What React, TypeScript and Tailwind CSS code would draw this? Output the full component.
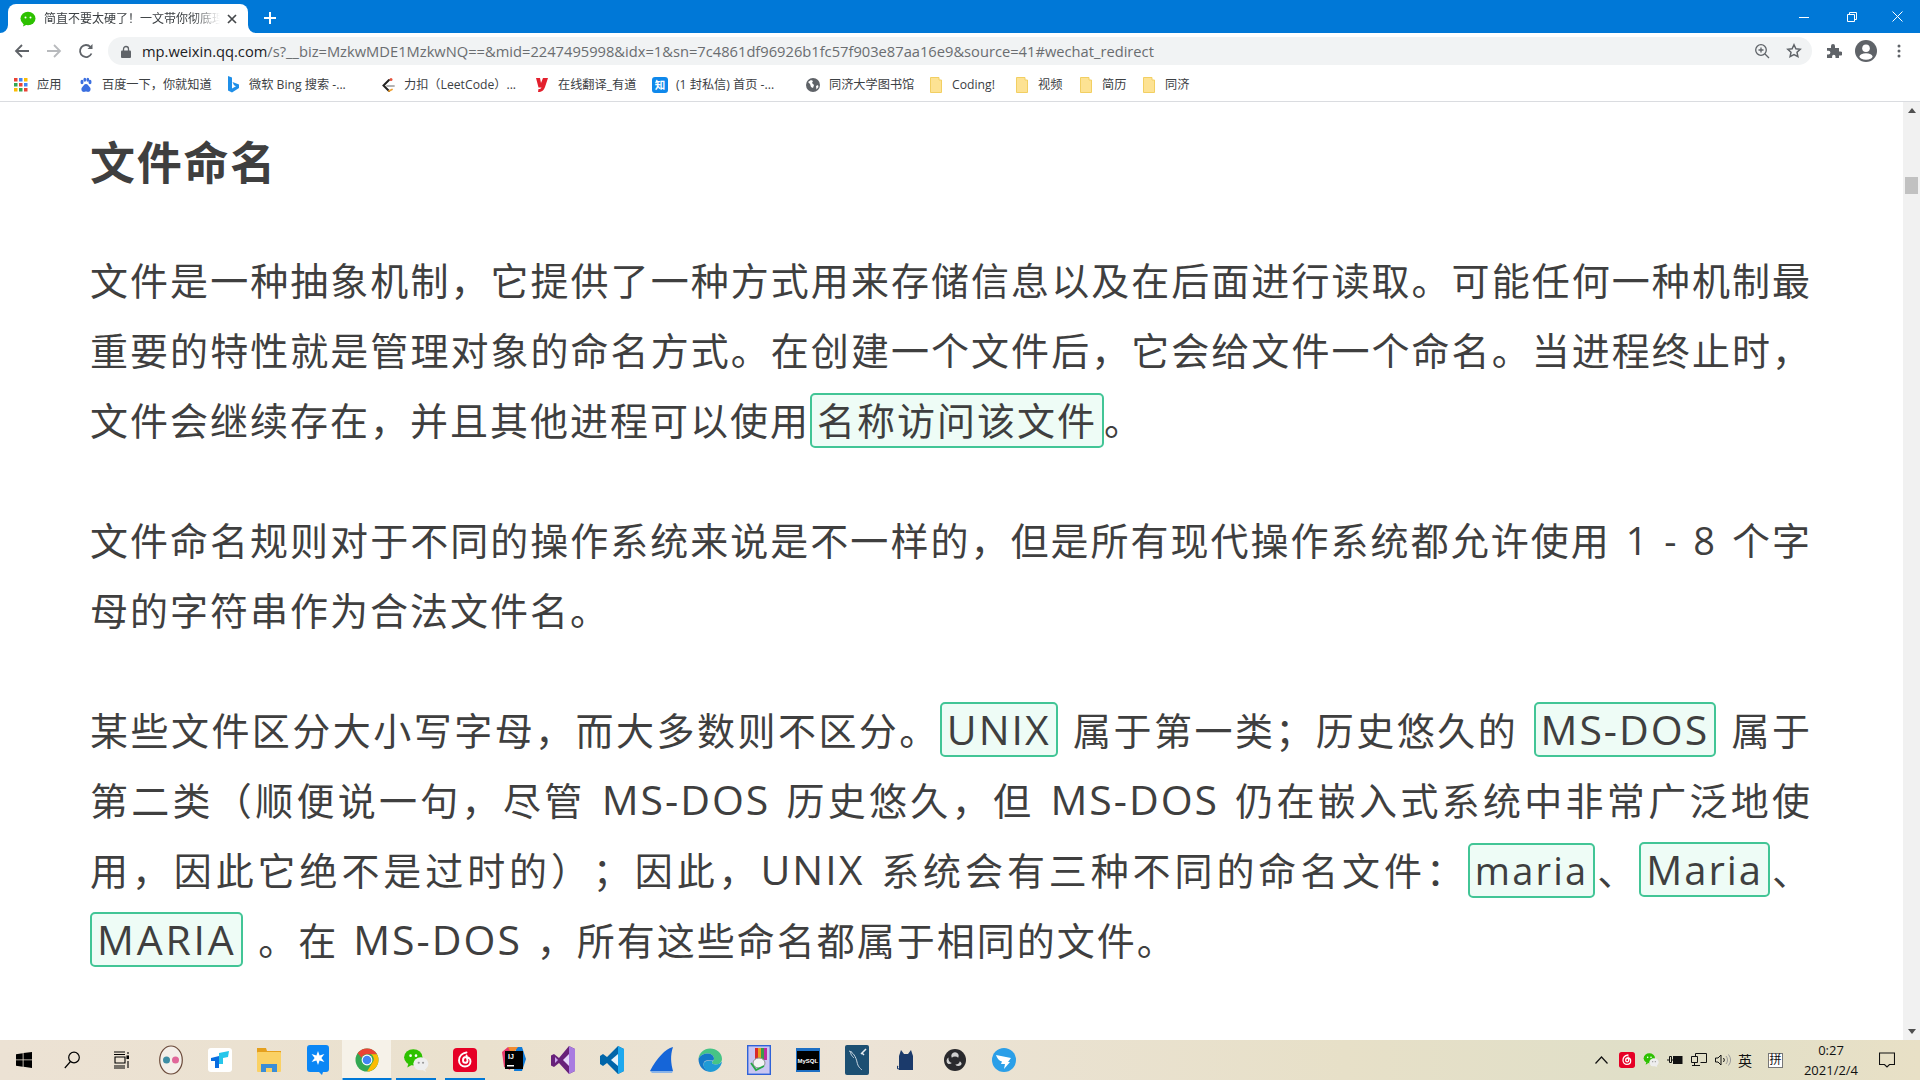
import React from 'react';

const ui = { fontFamily: '"Open Sans", "Noto Sans CJK SC", sans-serif' };

const WeChatGlyph = ({ size = 24 }: { size?: number }) => (
  <svg width={size} height={size} viewBox="0 0 24 24">
    <ellipse cx="9.5" cy="9.5" rx="8.5" ry="7.5" fill="#2dc100" />
    <path d="M5 15l-1 4 4-2.5z" fill="#2dc100" />
    <circle cx="7" cy="8" r="1.2" fill="#fff" />
    <circle cx="12" cy="8" r="1.2" fill="#fff" />
    <ellipse cx="16.5" cy="15.5" rx="7" ry="6" fill="#eeeeee" />
    <path d="M20 20l1.5 3-4-2z" fill="#eeeeee" />
    <circle cx="14.5" cy="14.5" r="1" fill="#999" />
    <circle cx="18.5" cy="14.5" r="1" fill="#999" />
  </svg>
);

const NeteaseGlyph = ({ size = 24 }: { size?: number }) => (
  <svg width={size} height={size} viewBox="0 0 24 24">
    <rect width="24" height="24" rx="4" fill="#e60026" />
    <path d="M13.5 4.5c-4 .6-7.5 3.5-7.5 8 0 3.6 2.800 6 6 6 3.200 0 5.500-2.300 5.500-5 0-2.600-2-4.500-4.300-4.500-2 0-3.200 1.500-3.200 3.200 0 1.500 1 2.600 2.300 2.600 1.400 0 2.200-1.200 2.200-2.400L13.500 7.500" fill="none" stroke="#fff" strokeWidth="1.900" strokeLinecap="round" />
  </svg>
);

const Folder = () => (
  <svg width="12" height="16" viewBox="0 0 12 16" className="mr-[2px] shrink-0">
    <path d="M.5.5h8.500v2.500h2.500v12.500h-11z" fill="#fde293" stroke="#f2cf62" />
  </svg>
);

const bookmarks: { width: string; label: string; icon: React.ReactNode }[] = [
  {
    width: 'w-[65px]',
    label: '应用',
    icon: (
      <svg width="16" height="16" viewBox="0 0 16 16">
        {[1, 6, 11].flatMap((y, i) =>
          [1, 6, 11].map((x, j) => (
            <rect key={`${i}${j}`} x={x} y={y} width="3.500" height="3.500" fill={['#ea4335', '#4285f4', '#fbbc04', '#34a853', '#ea4335', '#4285f4', '#fbbc04', '#34a853', '#ea4335'][i * 3 + j]} />
          )),
        )}
      </svg>
    ),
  },
  {
    width: 'w-[147px]',
    label: '百度一下，你就知道',
    icon: (
      <svg width="16" height="16" viewBox="0 0 16 16" fill="#3b6fe0">
        <ellipse cx="4" cy="5" rx="1.500" ry="2.200" />
        <ellipse cx="12" cy="5" rx="1.500" ry="2.200" />
        <ellipse cx="6.800" cy="2.800" rx="1.400" ry="2" />
        <ellipse cx="9.800" cy="2.800" rx="1.400" ry="2" />
        <path d="M8 7c-2 0-2.500 2-4 3.500C2.800 12 3.500 15 6 15c1 0 1.200-.4 2-.4s1 .4 2 .4c2.500 0 3.200-3 2-4.500C10.500 9 10 7 8 7z" />
      </svg>
    ),
  },
  {
    width: 'w-[155px]',
    label: '微软 Bing 搜索 -...',
    icon: (
      <svg width="16" height="18" viewBox="0 0 16 18">
        <path d="M3 0l4 1.500v11l4-2.200-2-1L7.500 6l6.500 2.500v3.500L7 16.500 3 14.500z" fill="#1f8fe8" />
      </svg>
    ),
  },
  {
    width: 'w-[154px]',
    label: '力扣（LeetCode）...',
    icon: (
      <svg width="16" height="16" viewBox="0 0 16 16" fill="none" strokeLinecap="round">
        <path d="M9 3L3.500 8.500 9 14" stroke="#222" strokeWidth="2" />
        <path d="M7 9h7" stroke="#b3b3b3" strokeWidth="1.800" />
        <path d="M9 14l3-1.500" stroke="#f0a030" strokeWidth="1.800" />
        <circle cx="11" cy="2.500" r="1.500" fill="#e5533d" />
      </svg>
    ),
  },
  {
    width: 'w-[118px]',
    label: '在线翻译_有道',
    icon: (
      <svg width="16" height="16" viewBox="0 0 16 16" fill="#e3202d">
        <path d="M2 1h4l1 5 2-5h5l-3 9c-1 3-3 5-7 5l.5-3c1.500 0 2.500-.5 3-1.500H4.500z" />
      </svg>
    ),
  },
  {
    width: 'w-[153px]',
    label: '(1 封私信) 首页 -...',
    icon: (
      <svg width="16" height="16" viewBox="0 0 16 16">
        <rect width="16" height="16" rx="3" fill="#0f88eb" />
        <text x="8" y="12" textAnchor="middle" fontSize="10.500" fontWeight="700" fill="#fff" fontFamily='"Noto Sans CJK SC", sans-serif'>知</text>
      </svg>
    ),
  },
  {
    width: 'w-[125px]',
    label: '同济大学图书馆',
    icon: (
      <svg width="16" height="16" viewBox="0 0 16 16">
        <circle cx="8" cy="8" r="7" fill="#5f6368" />
        <path d="M3 5l3-2 2 1-1 2 2 2-1 3-2-1-1-3zM11 9l2-1 .5 2-2 2.500z" fill="#fff" />
      </svg>
    ),
  },
  { width: 'w-[86px]', label: 'Coding!', icon: <Folder /> },
  { width: 'w-[64px]', label: '视频', icon: <Folder /> },
  { width: 'w-[63px]', label: '简历', icon: <Folder /> },
  { width: 'w-[60px]', label: '同济', icon: <Folder /> },
];

const apps: { id: string; box?: string; icon: React.ReactNode }[] = [
  {
    id: 'flickr',
    icon: (
      <svg width="24" height="30" viewBox="0 0 24 30">
        <ellipse cx="12" cy="15" rx="11.300" ry="14" fill="#f4efe9" stroke="#6b4a3a" strokeWidth="1.200" />
        <circle cx="7.500" cy="15" r="3.500" fill="#3e8ea5" />
        <circle cx="16.500" cy="15" r="3.500" fill="#e0679a" />
      </svg>
    ),
  },
  {
    id: 'todo',
    icon: (
      <svg width="24" height="30" viewBox="0 0 24 30">
        <rect y="3" width="24" height="24" rx="3" fill="#fff" />
        <path d="M3 13l8-2v12H7v-7H3z" fill="#0a6de0" />
        <path d="M11 8l10-2-1 6-5 1v6h-4z" fill="#26c6ea" />
      </svg>
    ),
  },
  {
    id: 'files',
    icon: (
      <svg width="24" height="26" viewBox="0 0 24 26">
        <path d="M0 1h9l1 3h14v2H0z" fill="#e5a01d" />
        <rect y="5" width="24" height="20" rx="1" fill="#fad165" />
        <path d="M4 17h16v8h-5v-4H9v4H4z" fill="#3b8ed8" />
      </svg>
    ),
  },
  {
    id: 'tim',
    icon: (
      <svg width="22" height="30" viewBox="0 0 22 30">
        <path d="M3 0h16a3 3 0 013 3v21a3 3 0 01-3 3h-3l-1 3-3-3H3a3 3 0 01-3-3V3a3 3 0 013-3z" fill="#0a86f5" />
        <path d="M11 6l1.600 4.600 4.800-1.600-3 4 3 4-4.800-1.600L11 20l-1.600-4.600L4.600 17l3-4-3-4 4.800 1.600z" fill="#fff" />
      </svg>
    ),
  },
  {
    id: 'chrome',
    box: 'bg-[#f6f2e9]',
    icon: (
      <svg width="24" height="28" viewBox="0 0 24 24">
        <circle cx="12" cy="12" r="11.500" fill="#34a853" />
        <path d="M12 .5a11.500 11.500 0 0110 5.800H12a5.700 5.700 0 00-5.300 3.400L2.600 5.300A11.500 11.500 0 0112 .5z" fill="#ea4335" />
        <path d="M22 6.300a11.500 11.500 0 01-10 17.200l5-8.200a5.700 5.700 0 00-1-9z" fill="#fbbc04" />
        <circle cx="12" cy="12" r="5.400" fill="#fff" />
        <circle cx="12" cy="12" r="4.300" fill="#4285f4" />
      </svg>
    ),
  },
  { id: 'wechat', icon: <WeChatGlyph size={26} /> },
  { id: 'netease', icon: <NeteaseGlyph size={24} /> },
  {
    id: 'idea',
    icon: (
      <svg width="24" height="26" viewBox="0 0 24 26">
        <path d="M0 5l6-5 6 3-4 20-6-3z" fill="#e8386b" />
        <path d="M14 0h6l4 12-4 12H12z" fill="#0e7ad8" />
        <path d="M6 0h10L10 8z" fill="#f28b30" />
        <rect x="3" y="4" width="18" height="18" fill="#000" />
        <text x="6" y="12" fontSize="7" fontWeight="700" fill="#fff" fontFamily='"Liberation Sans", sans-serif'>IJ</text>
        <rect x="5" y="18" width="7" height="1.500" fill="#fff" />
      </svg>
    ),
  },
  {
    id: 'vs',
    icon: (
      <svg width="24" height="30" viewBox="0 0 24 30">
        <path d="M18 1l6 3v22l-6 3-10-11-5 4-3-1.500V10.500L3 9l5 4z" fill="#68217a" />
        <path d="M18 1l6 3v22l-6 3z" fill="#a97be0" />
        <path d="M4 12v6l3-3z" fill="#c9a6ee" />
        <path d="M18 9l-6 6 6 6z" fill="#e6d7fa" />
      </svg>
    ),
  },
  {
    id: 'vscode',
    icon: (
      <svg width="24" height="30" viewBox="0 0 24 30">
        <path d="M18 1l6 3v22l-6 3-11-11-4 3-3-2V11l3-2 4 3z" fill="#0065a9" />
        <path d="M18 1l6 3v22l-6 3z" fill="#1ea8ee" />
        <path d="M18 9l-7 6 7 6z" fill="#e9f3fa" />
      </svg>
    ),
  },
  {
    id: 'wireshark',
    icon: (
      <svg width="24" height="28" viewBox="0 0 24 28">
        <path d="M24 1C16 3 8 12 1 25h23c-2-8-3-15 0-24z" fill="#1565d8" />
        <path d="M1 25h23l-1 2H3z" fill="#8ab4e8" />
      </svg>
    ),
  },
  {
    id: 'edge',
    icon: (
      <svg width="24" height="30" viewBox="0 0 24 24">
        <path d="M12 .5C18.500.5 24 5 24 11c0 3.500-3 5.500-6 5.500-2.500 0-4-1-4-2 0-1 2-1.500 2-4 0-3-3-5-6.500-5C5 5.500 1.500 8 .5 11 1 5 6 .5 12 .5z" fill="#46c486" />
        <path d="M.5 11c1-3 4.500-5.500 9-5.500 3.500 0 6.500 2 6.500 5 0 .8-.2 1.500-.7 2H9c-2 0-3.500 1.500-3.500 4 0 3 2.500 6 6.500 7C5.500 24 .5 18 .5 11z" fill="#1478c8" />
        <path d="M9 13c3 0 5-.2 6.300-.5-.8 1-1.300 1.200-1.300 2 0 1 1.500 2 4 2 2 0 4.500-1 6-3-1 6-6 10.500-12 10.500-3.500-1-6.500-4-6.500-7 0-2.500 1.500-4 3.500-4z" fill="#1f9ad6" />
      </svg>
    ),
  },
  {
    id: 'winrar',
    icon: (
      <svg width="24" height="30" viewBox="0 0 24 30">
        <rect x=".7" y=".7" width="22.600" height="28.600" fill="#c9c6f2" stroke="#2f62d8" strokeWidth="1.400" />
        <rect x="8" y="3" width="3" height="12" fill="#d92a2a" />
        <rect x="11" y="3" width="3" height="12" fill="#e8a020" />
        <rect x="14" y="3" width="3" height="12" fill="#3a9a4a" />
        <rect x="17" y="3" width="3" height="12" fill="#c02aa0" />
        <ellipse cx="12" cy="18" rx="6" ry="5" fill="#f3f3f3" stroke="#8f8f8f" />
        <path d="M4 18l5 7 8-4" fill="none" stroke="#28a745" strokeWidth="1.800" />
      </svg>
    ),
  },
  {
    id: 'mysqlcli',
    icon: (
      <svg width="24" height="24" viewBox="0 0 24 24">
        <rect width="24" height="24" fill="#1d6fc4" />
        <rect x="1" y="3" width="22" height="19" fill="#000" />
        <text x="1.500" y="15" fontSize="6" fontWeight="700" fill="#fff" fontFamily='"Liberation Sans", sans-serif'>MySQL</text>
      </svg>
    ),
  },
  {
    id: 'workbench',
    icon: (
      <svg width="24" height="30" viewBox="0 0 24 30">
        <rect width="24" height="30" rx="2" fill="#1c4f72" />
        <path d="M4 6c4 1 7 6 8 11s3 6 5 8M6 6c-1 3 1 5 3 7" fill="none" stroke="#c8d6e0" strokeWidth="1" />
        <path d="M16 9l5-5M19 10l-2-2" stroke="#e8eef2" strokeWidth="1.500" />
      </svg>
    ),
  },
  {
    id: 'cat',
    icon: (
      <svg width="18" height="24" viewBox="0 0 18 24">
        <path d="M4 2l3 4h4l3-4 2 6v14H2V8z" fill="#1b3a6b" />
        <path d="M2 21c-2 0-2-2-1-3" fill="none" stroke="#1b3a6b" strokeWidth="1.200" />
      </svg>
    ),
  },
  {
    id: 'obs',
    icon: (
      <svg width="22" height="26" viewBox="0 0 24 24">
        <circle cx="12" cy="12" r="12" fill="#2a2a2d" />
        <path d="M12 3.500a4 4 0 013.500 6 5 5 0 00-7 0 4 4 0 013.500-6z" fill="#d0d0d0" />
        <path d="M4.700 16.300a4 4 0 01.300-7 5 5 0 003.500 6 4 4 0 01-3.800 1z" fill="#d0d0d0" />
        <path d="M19.300 16.300a4 4 0 01-7 .5 5 5 0 005-3.500 4 4 0 012 3z" fill="#d0d0d0" />
      </svg>
    ),
  },
  {
    id: 'dingtalk',
    icon: (
      <svg width="24" height="30" viewBox="0 0 24 24">
        <circle cx="12" cy="12" r="12" fill="#2b9fe8" />
        <path d="M4 7l15 3-3 4h2l-6 7 1-5H9l1-2.500C7 13 5 10 4 7z" fill="#fff" />
      </svg>
    ),
  },
];

const Chip = ({ type, children }: { type: string; children: React.ReactNode }) => (
  <span className={`my-[-10px] inline-block h-[55px] rounded-[5px] border-2 border-[#42c596] bg-[#eefcf6] px-[5px] leading-[51px] ${type}`}>{children}</span>
);

const Toolbar = () => (
  <div className="flex h-[36px] items-center bg-white pt-[4px] pb-[4px]">
    <div className="flex w-[108px] shrink-0 items-center">
      <svg width="16" height="16" viewBox="0 0 16 16" className="ml-[14px]" fill="none" stroke="#5f6368" strokeWidth="1.800">
        <path d="M15 8H2M8 2L2 8l6 6" />
      </svg>
      <svg width="16" height="16" viewBox="0 0 16 16" className="ml-[16px]" fill="none" stroke="#b8babd" strokeWidth="1.800">
        <path d="M1 8h13M8 2l6 6-6 6" />
      </svg>
      <svg width="16" height="16" viewBox="0 0 16 16" className="ml-[16px]" fill="none" stroke="#5f6368" strokeWidth="1.800">
        <path d="M13.500 10.500A6 6 0 1112.500 4" />
        <path d="M14.500 1v5h-5" fill="#5f6368" stroke="none" />
      </svg>
    </div>
    <div className="flex h-[28px] w-[1704px] shrink-0 items-center rounded-full bg-[#f1f3f4] pl-[13px]">
      <svg width="10" height="13" viewBox="0 0 10 13" className="shrink-0">
        <path d="M2.500 6V4a2.500 2.500 0 015 0v2" fill="none" stroke="#5f6368" strokeWidth="1.300" />
        <rect y="5.500" width="10" height="7.500" rx="1" fill="#5f6368" />
      </svg>
      <div className="ml-[11px] w-[1613px] shrink-0 truncate text-[14.7px] text-[#6a6d70]">
        <span className="text-[#202124]">mp.weixin.qq.com</span>/s?__biz=MzkwMDE1MzkwNQ==&amp;mid=2247495998&amp;idx=1&amp;sn=7c4861df96926b1fc57f903e87aa16e9&amp;source=41#wechat_redirect
      </div>
      <svg width="16" height="16" viewBox="0 0 16 16" className="ml-[-1px] shrink-0" fill="none" stroke="#5f6368" strokeWidth="1.300">
        <circle cx="7" cy="7" r="5.300" />
        <path d="M11 11l4 4M7 4.500v5M4.500 7h5" />
      </svg>
      <svg width="16" height="16" viewBox="0 0 16 16" className="ml-[16px] shrink-0" fill="none" stroke="#5f6368" strokeWidth="1.500">
        <path d="M8 1.800l1.900 4 4.300.5-3.200 3 .9 4.300L8 11.500l-3.900 2.100.9-4.300-3.200-3 4.300-.5z" />
      </svg>
    </div>
    <svg width="16" height="16" viewBox="0 0 16 16" className="ml-[14px] shrink-0" fill="#5f6368">
      <path d="M1 5h4V3a2 2 0 014 0v2h4v3.500h1.500a2 2 0 010 4H13V15H9.500v-1.500a1.700 1.700 0 00-3.400 0V15H1v-3.500h1.500a1.900 1.900 0 000-3.800H1z" />
    </svg>
    <svg width="22" height="22" viewBox="0 0 22 22" className="ml-[13px] shrink-0">
      <circle cx="11" cy="11" r="11" fill="#5f6368" />
      <circle cx="11" cy="8.300" r="3.800" fill="#fff" />
      <ellipse cx="11" cy="16.500" rx="6.500" ry="3.300" fill="#fff" />
    </svg>
    <svg width="4" height="16" viewBox="0 0 4 16" className="ml-[20px] shrink-0" fill="#5f6368">
      <circle cx="2" cy="3" r="1.500" />
      <circle cx="2" cy="8" r="1.500" />
      <circle cx="2" cy="13" r="1.500" />
    </svg>
  </div>
);

export default function App() {
  return (
    <div className="flex h-screen w-[1920px] flex-col overflow-hidden bg-white" style={ui}>
      {/* title bar */}
      <div className="flex h-[33px] shrink-0 items-end bg-[#0078d7]">
        <div className="relative ml-[8px] flex h-[29px] w-[240px] items-center rounded-t-[8px] bg-white">
          <svg width="8" height="8" viewBox="0 0 8 8" className="absolute bottom-0 left-[-8px]"><path d="M8 0v8H0a8 8 0 008-8z" fill="#fff" /></svg>
          <svg width="8" height="8" viewBox="0 0 8 8" className="absolute right-[-8px] bottom-0"><path d="M0 0v8h8a8 8 0 01-8-8z" fill="#fff" /></svg>
          <div className="ml-[12px] shrink-0"><svg width="16" height="16" viewBox="0 0 16 16"><ellipse cx="8" cy="7.500" rx="7.500" ry="6.800" fill="#2dc100" /><path d="M4 12l-1 3.500 4-2z" fill="#2dc100" /><circle cx="5.500" cy="6.500" r="1" fill="#fff" /><circle cx="10.500" cy="6.500" r="1" fill="#fff" /></svg></div>
          <div className="ml-[8px] w-[176px] overflow-hidden whitespace-nowrap text-[12px] text-[#3c4043] [mask-image:linear-gradient(90deg,#000_85%,transparent)]">简直不要太硬了！一文带你彻底理</div>
          <svg width="10" height="10" viewBox="0 0 10 10" className="ml-[7px]" fill="none" stroke="#45484b" strokeWidth="1.700"><path d="M1 1l8 8M9 1L1 9" /></svg>
        </div>
        <svg width="12" height="12" viewBox="0 0 12 12" className="mb-[9px] ml-[16px]" fill="none" stroke="#fff" strokeWidth="2"><path d="M6 0v12M0 6h12" /></svg>
        <div className="mb-[10px] ml-auto flex items-center self-center pt-[10px]">
          <svg width="10" height="10" viewBox="0 0 10 10" fill="none" stroke="#fff"><path d="M0 5.500h10" /></svg>
          <svg width="10" height="10" viewBox="0 0 10 10" className="ml-[38px]" fill="none" stroke="#fff"><path d="M.5 2.500h7v7h-7zM2.500 2.500v-2h7v7h-2" /></svg>
          <svg width="11" height="11" viewBox="0 0 11 11" className="mr-[17px] ml-[35px]" fill="none" stroke="#fff"><path d="M.5.500l10 10M10.500.500l-10 10" /></svg>
        </div>
      </div>

      <Toolbar />

      {/* bookmarks */}
      <div className="flex h-[33px] shrink-0 items-center border-b border-[#dadce0] bg-white pt-[1px] pl-[13px] text-[12.2px] text-[#3c4043]">
        {bookmarks.map(b => (
          <div key={b.label} className={`${b.width} flex shrink-0 items-center gap-[8px] whitespace-nowrap`}>
            {b.icon}
            <span>{b.label}</span>
          </div>
        ))}
      </div>

      {/* article */}
      <div className="flex min-h-0 flex-1">
        <main className="min-w-0 flex-1 pt-[31px] pr-[91px] pl-[90px] text-[#3f3f3f]">
          <h2 className="mb-[52px] text-[45px] leading-[60px] font-bold tracking-[1.750px]">文件命名</h2>
          <div className="space-y-[50px] text-justify text-[38px] leading-[70px] tracking-[2px] [text-spacing-trim:space-all] [word-spacing:3px]">
            <p>
              文件是一种抽象机制，它提供了一种方式用来存储信息以及在后面进行读取。可能任何一种机制最重要的特性就是管理对象的命名方式。在创建一个文件后，它会给文件一个命名。当进程终止时，文件会继续存在，并且其他进程可以使用<Chip type="tracking-[2px]">名称访问该文件</Chip>。
            </p>
            <p>文件命名规则对于不同的操作系统来说是不一样的，但是所有现代操作系统都允许使用 1 - 8 个字母的字符串作为合法文件名。</p>
            <p>
              某些文件区分大小写字母，而大多数则不区分。<Chip type="text-[41px] tracking-[2px]">UNIX</Chip> 属于第一类；历史悠久的 <Chip type="text-[41px] tracking-[2px]">MS-DOS</Chip> 属于第二类（顺便说一句，尽管 <span className="text-[41px] leading-none">MS-DOS</span> 历史悠久，但 <span className="text-[41px] leading-none">MS-DOS</span> 仍在嵌入式系统中非常广泛地使用，因此它绝不是过时的）；因此，<span className="text-[41px] leading-none">UNIX</span> 系统会有三种不同的命名文件：<Chip type="tracking-[2.200px]">maria</Chip>、<Chip type="text-[40px] tracking-[2px]">Maria</Chip>、<Chip type="text-[41px] tracking-[2.800px]">MARIA</Chip> 。在 <span className="text-[41px] leading-none">MS-DOS</span> ，所有这些命名都属于相同的文件。
            </p>
          </div>
        </main>
        <div className="flex w-[17px] shrink-0 flex-col items-center bg-[#f1f1f1]">
          <svg width="8" height="5" viewBox="0 0 8 5" className="mt-[6px]"><path d="M4 0l4 5H0z" fill="#505050" /></svg>
          <div className="mt-[64px] h-[17px] w-[13px] bg-[#c1c1c1]" />
          <svg width="8" height="5" viewBox="0 0 8 5" className="mt-auto mb-[6px]"><path d="M4 5l4-5H0z" fill="#505050" /></svg>
        </div>
      </div>

      {/* taskbar */}
      <div className="flex h-[40px] shrink-0 items-stretch bg-[linear-gradient(90deg,#ece2d4_0%,#eae1ce_25%,#ece3d6_45%,#e7e0c8_70%,#e0dfc8_85%,#e8e0c6_100%)]">
        <div className="flex w-[48px] items-center justify-center">
          <svg width="16" height="16" viewBox="0 0 16 16" fill="#000"><path d="M0 2.200l6.700-1v6.300H0zM7.500 1l8.500-1v7.500H7.500zM0 8.300h6.700v6.400l-6.700-1zM7.500 8.300H16V16l-8.500-1.200z" /></svg>
        </div>
        <div className="flex w-[48px] items-center justify-center">
          <svg width="16" height="18" viewBox="0 0 16 18" fill="none" stroke="#000" strokeWidth="1.200"><circle cx="10" cy="6.500" r="5.300" /><path d="M6.500 10.500L.8 17" /></svg>
        </div>
        <div className="flex w-[50px] items-center justify-center">
          <svg width="16" height="18" viewBox="0 0 16 18" fill="none" stroke="#000" strokeWidth="1.100"><path d="M1 1h11M1 3.500h11M2 6h10v6H2zM1 15h11M1 17h11" /><rect x="14" y="5" width="2" height="2.500" fill="#000" /><path d="M15 1v2M15 10v7" /></svg>
        </div>
        {apps.map(a => {
          const under = a.id === 'chrome' ? 'w-full' : a.id === 'wechat' || a.id === 'netease' ? 'w-[40px]' : '';
          return (
            <div key={a.id} className={`relative flex w-[49px] shrink-0 items-center justify-center ${a.box ?? ''}`}>
              {a.icon}
              {under && <span className={`absolute bottom-0 left-1/2 h-[2px] -translate-x-1/2 bg-[#0078d7] ${under}`} />}
            </div>
          );
        })}
        <div className="ml-auto flex items-center text-[#111]">
          <svg width="13" height="8" viewBox="0 0 13 8" fill="none" stroke="#111" strokeWidth="1.200"><path d="M.5 7.500l6-6.500 6 6.500" /></svg>
          <div className="ml-[11px]"><NeteaseGlyph size={16} /></div>
          <div className="ml-[8px]"><WeChatGlyph size={16} /></div>
          <svg width="16" height="12" viewBox="0 0 16 12" className="ml-[8px]" fill="none" stroke="#111"><path d="M0 6h2M2.500 2.500h2v6h-2zM4.500 6h2" /><rect x="6.500" y="2.500" width="8.500" height="7" fill="#111" /></svg>
          <svg width="16" height="14" viewBox="0 0 16 14" className="ml-[8px]" fill="none" stroke="#111"><path d="M4.500 3V.5h11v9h-6M.5 3.500h6v6h-6zM3.500 9.500v3M1 12.500h8" /></svg>
          <svg width="16" height="14" viewBox="0 0 16 14" className="ml-[8px]" fill="none" stroke="#111"><path d="M.5 5v4h2.500l3 3V2L3 5z" /><path d="M8.500 5a3 3 0 010 4" /><path d="M11 3a6 6 0 010 8M13.500 1.500a9 9 0 010 11" stroke="#9a9a9a" /></svg>
          <span className="ml-[7px] w-[16px] text-[14px]">英</span>
          <span className="ml-[14px] flex h-[15px] w-[15px] items-center justify-center border border-[#777] bg-white text-[12px] leading-none">拼</span>
          <div className="ml-[10px] w-[76px] text-center text-[13px] leading-[20px]">
            <div>0:27</div>
            <div>2021/2/4</div>
          </div>
          <svg width="16" height="16" viewBox="0 0 16 16" className="mr-[25px] ml-[10px]" fill="none" stroke="#111" strokeWidth="1.100"><path d="M.5 1h15v11.500h-5L8 15l-2.500-2.500h-5z" /></svg>
        </div>
      </div>
    </div>
  );
}
